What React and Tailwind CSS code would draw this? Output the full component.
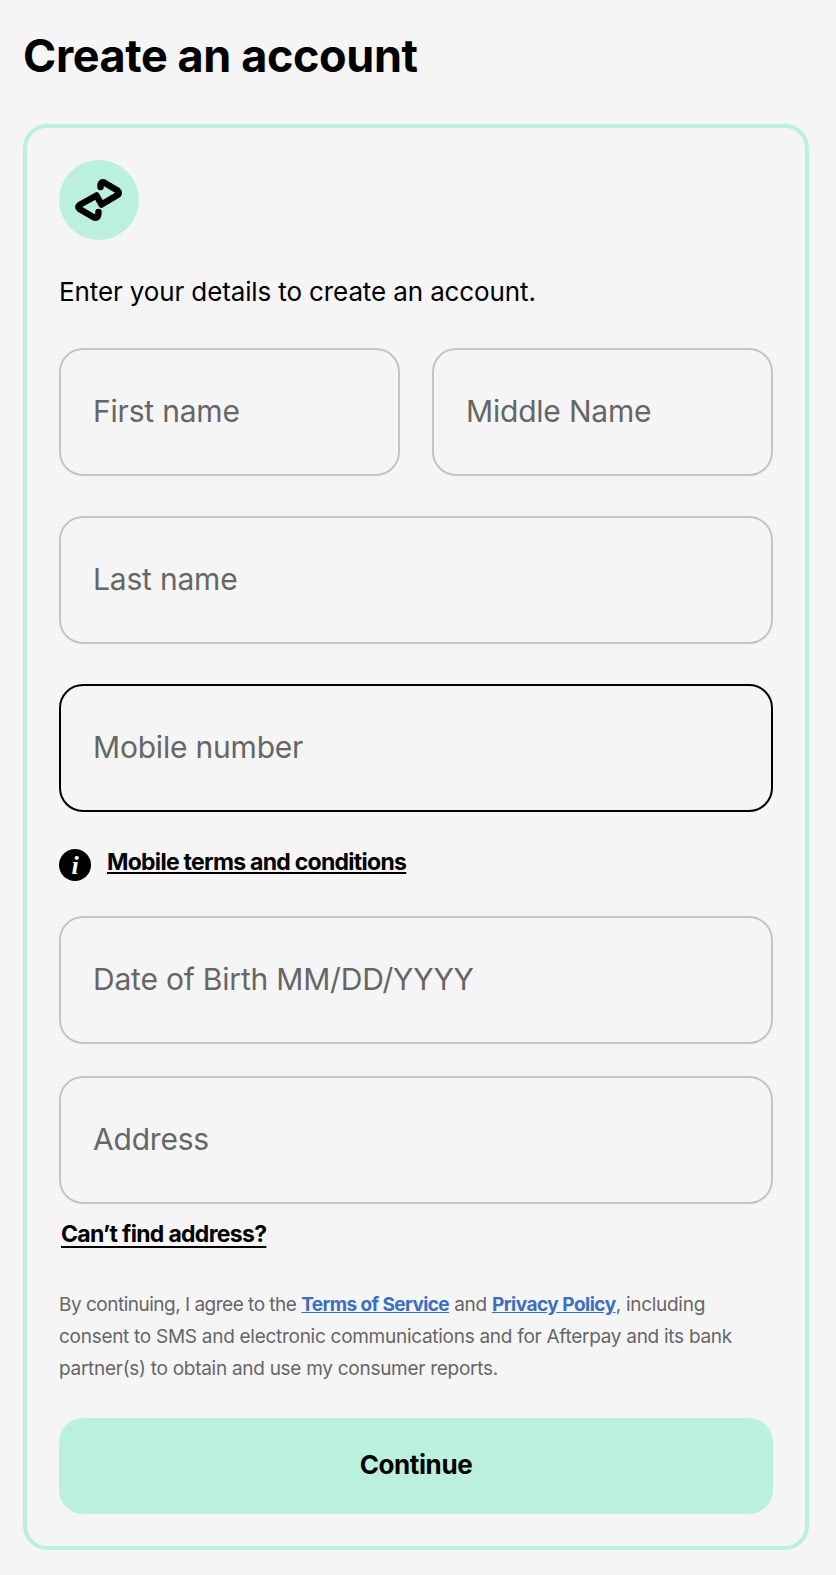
const font = { fontFamily: 'Inter, sans-serif' }

function Field({ placeholder, active, className = '' }) {
  return (
    <input
      type="text"
      placeholder={placeholder}
      className={`block w-full h-[128px] rounded-[24px] bg-transparent px-[32px] pb-[2px] text-[30px] tracking-[-0.2px] text-black placeholder-[#666666] outline-none border-2 ${active ? 'border-black' : 'border-[#c4c4c4]'} ${className}`}
    />
  )
}

// Afterpay loop mark, drawn on the 80px circle
function LoopMark() {
  return (
    <svg width="80" height="80" viewBox="0 0 80 80" fill="none" stroke="black" strokeWidth="6.5" strokeLinecap="round" strokeLinejoin="round">
      <path d="M41.5 27 Q41 21.5 45 22.5 L58.5 30.5 Q61 33 58.5 35 L42.5 44.5 L37.5 35.5 L20.5 45 Q18.5 47 20.5 49 L35 57.5 Q39.5 59 39.5 52" />
    </svg>
  )
}

export default function App() {
  return (
    <div className="min-h-[1575px] bg-[#f5f5f5] px-[23px] pt-[30px] text-black" style={font}>
      <h1 className="text-[45px] leading-[52px] font-bold tracking-[-0.4px]">Create an account</h1>
      <div className="mt-[42px] w-[786px] rounded-[24px] border-4 border-[#bbf1dc] p-[32px]">
        <div className="w-[80px] h-[80px] rounded-full bg-[#bbf1dc]">
          <LoopMark />
        </div>
        <p className="mt-[32px] text-[26px] leading-[40px] tracking-[-0.12px]">Enter your details to create an account.</p>
        <div className="mt-[36px] grid grid-cols-2 gap-[32px]">
          <Field placeholder="First name" />
          <Field placeholder="Middle Name" />
        </div>
        <Field placeholder="Last name" className="mt-[40px]" />
        <Field placeholder="Mobile number" active className="mt-[40px]" />
        <div className="mt-[34px] flex items-start gap-[16px]">
          <span className="mt-[3px] w-[32px] h-[32px] rounded-full bg-black text-white flex items-center justify-center text-[26px] font-bold italic" style={{ fontFamily: '"Liberation Serif", serif' }}>i</span>
          <a className="text-[23px] leading-[32px] font-bold underline underline-offset-2 decoration-2 tracking-[-0.72px]">Mobile terms and conditions</a>
        </div>
        <Field placeholder="Date of Birth MM/DD/YYYY" className="mt-[35px]" />
        <Field placeholder="Address" className="mt-[32px]" />
        <a className="block mt-[14px] ml-[2px] text-[23px] leading-[32px] font-bold underline underline-offset-4 decoration-2 tracking-[-0.7px]">Can’t find address?</a>
        <p className="mt-[39px] text-[19px] leading-[32px] tracking-[-0.28px] text-[#666666]">
          <span className="tracking-[-0.5px]">By continuing, I agree to the </span>
          <a className="font-bold text-[#3b6ec0] underline tracking-[-0.6px]">Terms of Service</a> and <a className="font-bold text-[#3b6ec0] underline tracking-[-0.5px]">Privacy Policy</a>, including consent to SMS and electronic communications and for Afterpay and its bank partner(s) to obtain and use my consumer reports.
        </p>
        <button className="mt-[33px] w-full h-[96px] rounded-[24px] bg-[#bbf1dc] pb-[4px] text-[26px] font-bold tracking-[-0.4px]">Continue</button>
      </div>
    </div>
  )
}
